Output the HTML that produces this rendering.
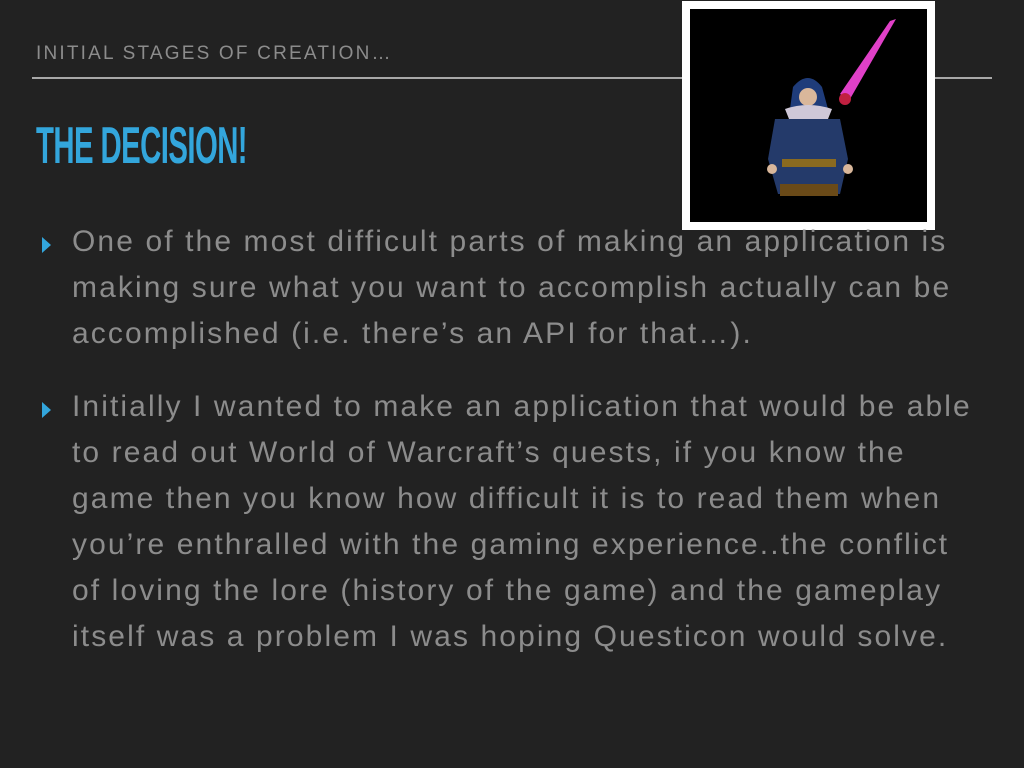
<!DOCTYPE html>
<html><head><meta charset="utf-8"><style>
html,body{margin:0;padding:0}
body{width:1024px;height:768px;background:#222222;position:relative;overflow:hidden;font-family:"Liberation Sans",sans-serif}
.hdr{position:absolute;left:36px;top:43px;font-size:19px;color:#8c8c8c;letter-spacing:2.2px;white-space:nowrap}
.rule{position:absolute;left:32px;top:77px;width:960px;height:2px;background:#a8a8a8}
.title{position:absolute;left:36px;top:116px;font-size:52px;font-weight:bold;color:#33a6dc;white-space:nowrap;transform:scaleX(0.564);transform-origin:left top;letter-spacing:-1px}
.pic{position:absolute;left:682px;top:1px;width:237px;height:213px;border:8px solid #fff;background:#000}
.l{position:absolute;left:72px;font-size:30px;color:#8c8c8c;white-space:nowrap;letter-spacing:2.1px}
.b{position:absolute;left:42px;width:0;height:0;border-left:9px solid #33a6dc;border-top:8px solid transparent;border-bottom:8px solid transparent}
</style></head><body>
<div class="hdr">INITIAL STAGES OF CREATION…</div>
<div class="rule"></div>
<div class="title">THE DECISION!</div>
<div class="pic">
<svg width="237" height="213" viewBox="0 0 237 213">
<polygon points="150,85 200,12 206,10 160,90" fill="#e040c8"/>
<circle cx="155" cy="90" r="6" fill="#c02040"/>
<path d="M103,78 Q118,60 132,78 L138,100 L100,100 Z" fill="#1f3c7a"/>
<circle cx="118" cy="88" r="9" fill="#d9b79b"/>
<path d="M95,100 Q118,92 142,100 L132,125 L105,125 Z" fill="#cfc8d8"/>
<path d="M85,110 L150,110 L158,150 L150,185 L88,185 L78,150 Z" fill="#243a6a"/>
<rect x="92" y="150" width="54" height="8" fill="#8a6a20"/>
<rect x="90" y="175" width="58" height="12" fill="#6a4a18"/>
<circle cx="82" cy="160" r="5" fill="#d9b79b"/>
<circle cx="158" cy="160" r="5" fill="#d9b79b"/>
</svg>
</div>
<div class="b" style="top:237px"></div>
<div class="l" style="top:225px">One of the most difficult parts of making an application is</div>
<div class="l" style="top:271px">making sure what you want to accomplish actually can be</div>
<div class="l" style="top:317px">accomplished (i.e. there’s an API for that…).</div>
<div class="b" style="top:402px"></div>
<div class="l" style="top:390px">Initially I wanted to make an application that would be able</div>
<div class="l" style="top:436px">to read out World of Warcraft’s quests, if you know the</div>
<div class="l" style="top:482px">game then you know how difficult it is to read them when</div>
<div class="l" style="top:528px">you’re enthralled with the gaming experience..the conflict</div>
<div class="l" style="top:574px">of loving the lore (history of the game) and the gameplay</div>
<div class="l" style="top:620px">itself was a problem I was hoping Questicon would solve.</div>
</body></html>
